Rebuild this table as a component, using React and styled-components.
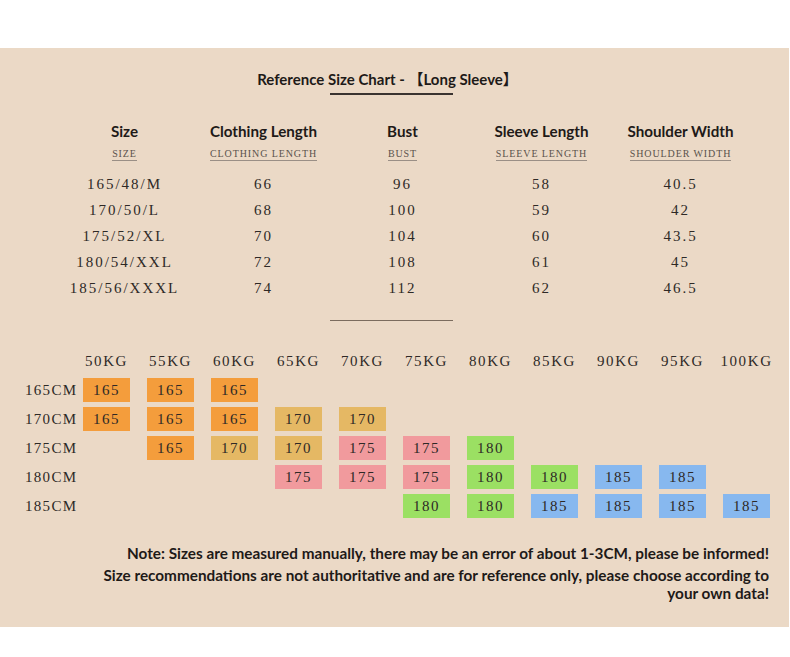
import React from "react";
import styled, { createGlobalStyle } from "styled-components";

const GlobalStyle = createGlobalStyle`
	body {
		margin: 0;
		background: #ffffff;
	}
`;

const sizeRows = [
	["165/48/M", "66", "96", "58", "40.5"],
	["170/50/L", "68", "100", "59", "42"],
	["175/52/XL", "70", "104", "60", "43.5"],
	["180/54/XXL", "72", "108", "61", "45"],
	["185/56/XXXL", "74", "112", "62", "46.5"],
];

const headers = [
	["Size", "SIZE"],
	["Clothing Length", "CLOTHING LENGTH"],
	["Bust", "BUST"],
	["Sleeve Length", "SLEEVE LENGTH"],
	["Shoulder Width", "SHOULDER WIDTH"],
];

const weights = ["50KG", "55KG", "60KG", "65KG", "70KG", "75KG", "80KG", "85KG", "90KG", "95KG", "100KG"];

const colors = {
	165: "#f49d3c",
	170: "#e5b864",
	175: "#f19a9d",
	180: "#9be063",
	185: "#87b8ef",
};

// null = empty cell
const chart = [
	["165CM", [165, 165, 165, null, null, null, null, null, null, null, null]],
	["170CM", [165, 165, 165, 170, 170, null, null, null, null, null, null]],
	["175CM", [null, 165, 170, 170, 175, 175, 180, null, null, null, null]],
	["180CM", [null, null, null, 175, 175, 175, 180, 180, 185, 185, null]],
	["185CM", [null, null, null, null, null, 180, 180, 185, 185, 185, 185]],
];

export default function App() {
	return (
		<>
			<GlobalStyle />
			<Panel>
				<Title>Reference Size Chart - 【Long Sleeve】</Title>
				<Rule $top={5} $color="#3a3330" />

				<SizeTable>
					{headers.map(([en]) => (
						<HeadCell key={en}>{en}</HeadCell>
					))}
					{headers.map(([en, sub]) => (
						<SubCell key={sub}>
							<span>{sub}</span>
						</SubCell>
					))}
					{sizeRows.map((row) =>
						row.map((val, i) => <DataCell key={row[0] + i}>{val}</DataCell>)
					)}
				</SizeTable>

				<Rule $top={19} $color="#7b6c5e" />

				<Chart>
					<ChartRow $head>
						<span />
						{weights.map((w) => (
							<WeightLabel key={w}>{w}</WeightLabel>
						))}
					</ChartRow>
					{chart.map(([height, cells]) => (
						<ChartRow key={height}>
							<HeightLabel>{height}</HeightLabel>
							{cells.map((c, i) =>
								c ? (
									<SizeBox key={i} $bg={colors[c]}>
										{c}
									</SizeBox>
								) : (
									<span key={i} />
								)
							)}
						</ChartRow>
					))}
				</Chart>

				<Notes>
					<NoteLine>
						Note: Sizes are measured manually, there may be an error of about 1-3CM, please be informed!
					</NoteLine>
					<NoteWrap>
						Size recommendations are not authoritative and are for reference only, please choose according to
						your own data!
					</NoteWrap>
				</Notes>
			</Panel>
		</>
	);
}

const Panel = styled.div`
	margin-top: 48px;
	width: 789px;
	height: 579px;
	box-sizing: border-box;
	padding-top: 22px;
	background: #ebd9c6;
	display: flex;
	flex-direction: column;
	color: #222;
`;

const Title = styled.div`
	font-family: Lato, "Noto Sans CJK SC", sans-serif;
	font-weight: 700;
	font-size: 15px;
	line-height: 18px;
	text-align: center;
	padding-right: 14px;
	color: #1e1a18;
`;

const Rule = styled.div`
	align-self: center;
	margin-top: ${(p) => p.$top}px;
	margin-left: -6px;
	width: 123px;
	height: 1.5px;
	background: ${(p) => p.$color};
`;

const SizeTable = styled.div`
	margin-top: 27px;
	padding-left: 55px;
	display: grid;
	grid-template-columns: repeat(5, 139px);
	grid-template-rows: 18px 31px;
	grid-auto-rows: 26px;
`;

const HeadCell = styled.div`
	font-family: Lato, sans-serif;
	font-weight: 700;
	font-size: 15.2px;
	line-height: 18px;
	text-align: center;
	color: #1e1a18;
`;

const SubCell = styled.div`
	padding-top: 7px;
	text-align: center;
	font-family: "Liberation Serif", serif;
	font-size: 10px;
	line-height: 14px;
	letter-spacing: 0.9px;
	color: #5a524c;

	span {
		border-bottom: 1px solid #9a8f86;
		padding-bottom: 1px;
	}
`;

const DataCell = styled.div`
	text-align: center;
	font-family: "Liberation Serif", serif;
	font-size: 15px;
	line-height: 26px;
	letter-spacing: 2px;
	color: #2e2926;
`;

const Chart = styled.div`
	margin-top: 31px;
	padding-left: 25px;
	display: flex;
	flex-direction: column;
	gap: 5px;
`;

const ChartRow = styled.div`
	display: grid;
	grid-template-columns: 58px repeat(11, 64px);
	height: ${(p) => (p.$head ? "18px" : "24px")};
	margin-bottom: ${(p) => (p.$head ? "3px" : "0")};
	align-items: center;
`;

const WeightLabel = styled.div`
	width: 47px;
	display: flex;
	justify-content: center;
	white-space: nowrap;
	font-family: "Liberation Serif", serif;
	font-size: 15px;
	line-height: 18px;
	letter-spacing: 1.6px;
	color: #2e2926;
`;

const HeightLabel = styled.div`
	white-space: nowrap;
	font-family: "Liberation Serif", serif;
	font-size: 15px;
	letter-spacing: 1.3px;
	color: #2e2926;
`;

const SizeBox = styled.div`
	width: 47px;
	height: 24px;
	background: ${(p) => p.$bg};
	display: flex;
	align-items: center;
	justify-content: center;
	font-family: "Liberation Serif", serif;
	font-size: 15px;
	letter-spacing: 1.5px;
	color: #2e2926;
`;

const Notes = styled.div`
	margin-top: 26px;
	padding-right: 20px;
	display: flex;
	flex-direction: column;
	align-items: flex-end;
	gap: 5px;
	font-family: Lato, sans-serif;
	font-weight: 700;
	font-size: 15.3px;
	color: #1e1a18;
	text-align: right;
`;

const NoteLine = styled.div`
	line-height: 18px;
	white-space: nowrap;
`;

const NoteWrap = styled.div`
	width: 680px;
	line-height: 17.5px;
`;
